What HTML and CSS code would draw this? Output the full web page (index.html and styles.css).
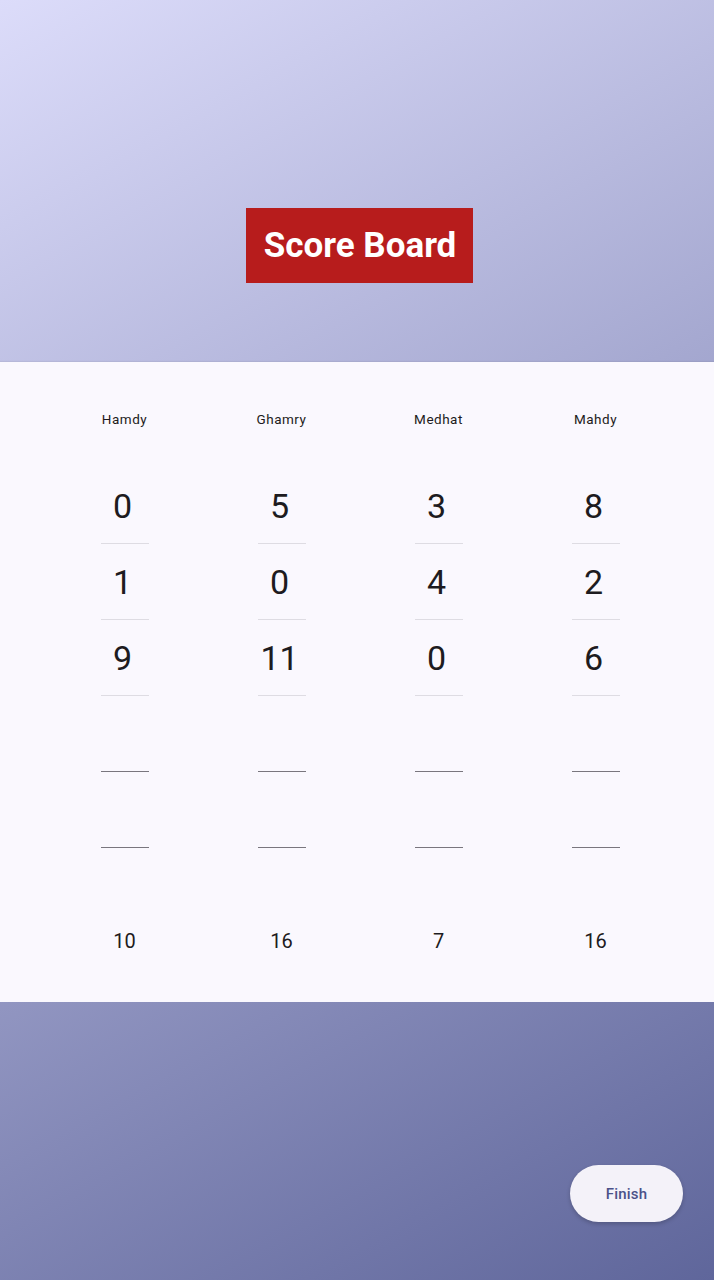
FILE: index.html
```html
<!DOCTYPE html>
<html>
<head>
<meta charset="utf-8">
<link rel="stylesheet" href="styles.css">
</head>
<body>
<div class="page">
  <header class="top">
    <h1 class="title">Score Board</h1>
  </header>
  <main class="card">
    <div class="col">
      <div class="name">Hamdy</div>
      <div class="field filled"><span>0</span></div>
      <div class="field filled"><span>1</span></div>
      <div class="field filled"><span>9</span></div>
      <div class="field empty"></div>
      <div class="field empty"></div>
      <div class="total">10</div>
    </div>
    <div class="col">
      <div class="name">Ghamry</div>
      <div class="field filled"><span>5</span></div>
      <div class="field filled"><span>0</span></div>
      <div class="field filled"><span>11</span></div>
      <div class="field empty"></div>
      <div class="field empty"></div>
      <div class="total">16</div>
    </div>
    <div class="col">
      <div class="name">Medhat</div>
      <div class="field filled"><span>3</span></div>
      <div class="field filled"><span>4</span></div>
      <div class="field filled"><span>0</span></div>
      <div class="field empty"></div>
      <div class="field empty"></div>
      <div class="total">7</div>
    </div>
    <div class="col">
      <div class="name">Mahdy</div>
      <div class="field filled"><span>8</span></div>
      <div class="field filled"><span>2</span></div>
      <div class="field filled"><span>6</span></div>
      <div class="field empty"></div>
      <div class="field empty"></div>
      <div class="total">16</div>
    </div>
  </main>
  <footer class="bottom">
    <button class="finish">Finish</button>
  </footer>
</div>
</body>
</html>
```
FILE: styles.css
```css
* { box-sizing: border-box; }
html, body { margin: 0; padding: 0; }
body {
  font-family: Roboto, "Noto Sans", sans-serif;
  width: 714px;
  height: 1280px;
  overflow: hidden;
}
.page {
  width: 714px;
  height: 1280px;
  display: flex;
  flex-direction: column;
  background: linear-gradient(150.85deg, #dcdcfa 0%, #5f669b 100%);
}
.top {
  height: 362px;
  display: flex;
  align-items: flex-end;
  justify-content: center;
  padding: 0 0 79px 5px;
}
.title {
  margin: 0;
  background: #b71c1c;
  color: #ffffff;
  font-weight: 700;
  font-size: 35px;
  line-height: 75px;
  height: 75px;
  padding: 0 16.5px 0 17.5px;
}
.card {
  height: 640px;
  background: #faf8fe;
  display: grid;
  grid-template-columns: repeat(4, 157px);
  padding: 47px 0 0 46px;
  box-shadow: 0 -1px 1px rgba(0,0,0,0.05);
}
.col {
  display: flex;
  flex-direction: column;
  align-items: center;
}
.name {
  font-size: 13.5px;
  letter-spacing: 0.5px;
  line-height: 20px;
  color: #1d1b20;
  margin-bottom: 39px;
}
.field {
  width: 48px;
  height: 76px;
  display: flex;
  align-items: center;
  justify-content: center;
  font-size: 34px;
  color: #1d1b20;
}
.field span { margin-right: 4px; }
.field.filled { border-bottom: 1px solid #dedce3; }
.field.empty { border-bottom: 1px solid #79767e; }
.total {
  margin-top: 81px;
  font-size: 20px;
  line-height: 24px;
  color: #1d1b20;
}
.bottom {
  flex: 1;
  display: flex;
  align-items: flex-end;
  justify-content: flex-end;
  padding: 0 31px 58px 0;
}
.finish {
  width: 113px;
  height: 57px;
  border: none;
  border-radius: 29px;
  background: #f4f2f9;
  color: #4b5189;
  font-family: Roboto, sans-serif;
  font-size: 15px;
  font-weight: 500;
  letter-spacing: 0.2px;
  box-shadow: 0 2px 4px rgba(0,0,0,0.2);
}
```
